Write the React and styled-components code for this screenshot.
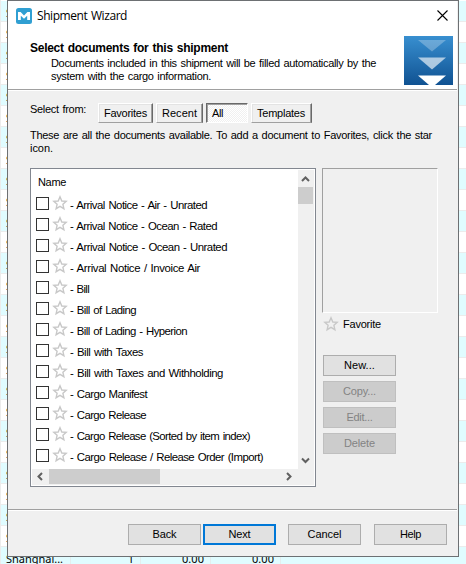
import React, { useLayoutEffect, useRef, useState } from "react";
import styled, { createGlobalStyle, css } from "styled-components";

const GlobalStyle = createGlobalStyle`
  * { box-sizing: border-box; }
  html, body { margin: 0; padding: 0; overflow: hidden; background: #fff; }
  body { font: 11px/13px "Liberation Sans", Arial, sans-serif; color: #000; }
  button { font: inherit; color: inherit; margin: 0; padding: 0; border-radius: 0; }
`;

const Screen = styled.div`
  position: relative;
  width: 466px;
  height: 564px;
  overflow: hidden;
  background: #fff;
`;

const Grid = styled.div`
  display: flex;
  flex-direction: column;
  padding-top: 1px;
  border-left: 1px solid #ececec;
`;

const GridRow = styled.div`
  flex: none;
  height: 21px;
  display: grid;
  grid-template-columns: 70px 70px 70px 70px 1fr;
  border-bottom: 1px solid #ececec;
  background: ${(p) => (p.$tinted ? "#e0fcff" : "#fff")};
  font: 11px/16px "Noto Sans", sans-serif;
  &:last-child { height: 17px; border-bottom: 0; }
`;

const GridCell = styled.div`
  padding: ${(p) => (p.$num ? "4px 6px 0 0" : "4px 0 0 5px")};
  text-align: ${(p) => (p.$num ? "right" : "left")};
  border-right: 1px solid #e3eeee;
  white-space: nowrap;
  &:last-child { border-right: 0; }
`;

const Dialog = styled.div`
  position: absolute;
  left: 7px;
  top: 0;
  width: 452px;
  height: 557px;
  display: flex;
  flex-direction: column;
  border: 1px solid #6d7073;
  background: #f0f0f0;
`;

const Header = styled.div`
  height: 90px;
  margin-right: 1px;
  border-bottom: 1px solid #fff;
  box-shadow: inset 0 -1px #a0a0a0;
  background: #fff;
`;

const TitleBar = styled.div`
  height: 30px;
  display: flex;
  align-items: center;
  padding: 0 9px 1px 8px;
  gap: 5px;
  font: 12px/16px "Open Sans", sans-serif;
  svg:last-child { margin-left: auto; }
`;

const Banner = styled.div`
  display: flex;
  justify-content: space-between;
  padding: 5px 4px 0 22px;
`;

const BannerText = styled.div`
  padding-top: 6px;
`;

const Heading = styled.div`
  height: 15px;
  font-size: 12px;
  font-weight: bold;
  line-height: 13px;
`;

const Description = styled.div`
  padding-left: 21px;
  line-height: 13px;
`;

const TabRow = styled.div`
  display: flex;
  height: 20px;
  margin-top: 12px;
  padding-left: 22px;
`;

const TabLabel = styled.div`
  width: 68px;
`;

const Tab = styled.button`
  height: 20px;
  width: ${(p) => p.$w}px;
  margin-right: 3px;
  padding-left: 5px;
  text-align: left;
  border: 1px solid;
  ${(p) =>
    p.$active
      ? css`
          border-color: #696969 #fff #fff #696969;
          box-shadow: inset 1px 1px #a0a0a0;
          background: repeating-conic-gradient(#fff 0 25%, #f0f0f0 0 50%) 0 0 / 2px 2px;
        `
      : css`
          border-color: #fff #696969 #a0a0a0 #fff;
          box-shadow: inset -1px 0 #a0a0a0, inset 1px 1px #e3e3e3;
          background: #f0f0f0;
        `}
`;

const Hint = styled.div`
  height: 33px;
  margin-top: 6px;
  padding-left: 22px;
`;

const Content = styled.div`
  display: flex;
  gap: 6px;
  height: 319px;
  margin-top: 6px;
  padding-left: 22px;
`;

const ListBox = styled.div`
  width: 286px;
  padding: 1px;
  display: grid;
  grid-template: 299px 16px / 266px 16px;
  border: 1px solid #828790;
  background: #fff;
`;

const List = styled.div`
  padding: 4px 0 0 4px;
  overflow: hidden;
`;

const ListHead = styled.div`
  height: 18px;
  padding: 2px 0 0 2px;
`;

const ListRow = styled.div`
  height: 21px;
  display: flex;
  align-items: flex-start;
`;

const Check = styled.div`
  width: 13px;
  height: 13px;
  margin: 5px 3px 0 0;
  border: 1px solid #333;
  background: #fff;
`;

const RowText = styled.div`
  margin: 7px 0 0 2px;
  font-size: 11.4px;
`;

const VScroll = styled.div`
  display: flex;
  flex-direction: column;
  justify-content: space-between;
  background: #f0f0f0;
`;

const HScroll = styled.div`
  grid-column: 1 / 3;
  display: flex;
  background: #f0f0f0;
`;

const VThumb = styled.div`
  height: 17px;
  width: 15px;
  margin-bottom: auto;
  background: #cdcdcd;
`;

const HThumb = styled.div`
  width: 111px;
  height: 15px;
  margin-right: auto;
  background: #cdcdcd;
`;

const Arrow = styled.svg`
  flex: none;
  display: block;
  width: ${(p) => (p.$wide ? 17 : 15)}px;
  height: ${(p) => (p.$wide ? 15 : 17)}px;
  margin-right: ${(p) => p.$end || 0}px;
`;

const Side = styled.div`
  width: 116px;
`;

const Preview = styled.div`
  height: 145px;
  border: 1px solid;
  border-color: #a0a0a0 #fff #fff #a0a0a0;
`;

const FavoriteLine = styled.div`
  display: flex;
  gap: 4px;
  height: 17px;
  margin: 3px 0 22px 1px;
  line-height: 16px;
`;

const Actions = styled.div`
  display: flex;
  flex-direction: column;
  gap: 5px;
  padding-left: 1px;
`;

const PushButton = styled.button`
  width: 73px;
  height: 21px;
  display: flex;
  align-items: center;
  justify-content: center;
  border: ${(p) => (p.$primary ? "2px solid #0078d7" : "1px solid #adadad")};
  background: #e1e1e1;
  &:disabled {
    color: #838383;
    border-color: #bfbfbf;
    background: #cccccc;
  }
`;

const Footer = styled.div`
  display: flex;
  justify-content: flex-end;
  height: 47px;
  margin: 22px 1px 0 0;
  padding: 14px 10px 0 0;
  border-top: 1px solid #a0a0a0;
  box-shadow: inset 0 1px #fff;
`;

const ButtonPair = styled.div`
  display: flex;
  gap: 2px;
  margin-right: -1px;
`;

const FooterButtons = styled.div`
  display: grid;
  grid-template-columns: auto 73px 73px;
  column-gap: 13px;
`;

const Line = styled.span`
  display: inline-block;
  white-space: pre;
  word-spacing: 1px;
`;

/* A single line of text, tracked so that it occupies the given width. */
function Fit({ w, children }) {
  const ref = useRef(null);
  const [tracking, setTracking] = useState(0);
  useLayoutEffect(() => {
    const natural = ref.current.getBoundingClientRect().width;
    setTracking((w - natural) / children.length);
  }, [w, children]);
  return (
    <Line ref={ref} style={{ letterSpacing: `${tracking}px` }}>
      {children}
    </Line>
  );
}

const StarSvg = styled.svg`
  flex: none;
  display: block;
  margin-top: ${(p) => p.$top || 0}px;
`;

const Star = ({ top }) => (
  <StarSvg $top={top} width="16" height="16" viewBox="0 0 16 16">
    <path
      d="M8 1.8 L9.8 6 L14.2 6.4 L10.9 9.3 L11.9 13.7 L8 11.4 L4.1 13.7 L5.1 9.3 L1.8 6.4 L6.2 6 Z"
      fill="none"
      stroke="#c8c8c8"
      strokeWidth="1.4"
    />
  </StarSvg>
);

const AppIcon = () => (
  <svg width="16" height="16" viewBox="0 0 16 16">
    <rect width="16" height="16" rx="2.5" fill="#309fd2" />
    <path d="M2 12 V4 H4.6 L8 7.6 L11.4 4 H14 V12 H11.2 V7.8 L8 10.8 L4.8 7.8 V12 Z" fill="#fff" />
  </svg>
);

const CloseIcon = () => (
  <svg width="11" height="11" viewBox="0 0 11 11">
    <path d="M.5 .5 L10.5 10.5 M10.5 .5 L.5 10.5" stroke="#000" strokeWidth="1.1" />
  </svg>
);

const BannerArt = () => (
  <svg width="49" height="49" viewBox="0 0 49 49">
    <defs>
      <linearGradient id="blue" x1="0" y1="0" x2="0" y2="1">
        <stop offset="0" stopColor="#388fd0" />
        <stop offset="1" stopColor="#105292" />
      </linearGradient>
    </defs>
    <rect width="49" height="49" fill="url(#blue)" />
    <path d="M14 4 H42 L28 15.5 Z" fill="#fff" opacity=".27" />
    <path d="M14 21.5 H42 L28 33.5 Z" fill="#fff" opacity=".63" />
    <path d="M14 39.5 H42 L31 49 H25 Z" fill="#fff" />
  </svg>
);

const documents = [
  ["- Arrival Notice - Air - Unrated", 137],
  ["- Arrival Notice - Ocean - Rated", 147],
  ["- Arrival Notice - Ocean - Unrated", 157],
  ["- Arrival Notice / Invoice Air", 130],
  ["- Bill", 19],
  ["- Bill of Lading", 66],
  ["- Bill of Lading - Hyperion", 117],
  ["- Bill with Taxes", 73],
  ["- Bill with Taxes and Withholding", 153],
  ["- Cargo Manifest", 77],
  ["- Cargo Release", 76],
  ["- Cargo Release (Sorted by item index)", 180],
  ["- Cargo Release / Release Order (Import)", 193],
];

const tabs = [
  ["Favorites", 55, 43],
  ["Recent", 47, 35],
  ["All", 42, 11],
  ["Templates", 61, 48],
];

const actions = [
  ["New...", 31],
  ["Copy...", 33],
  ["Edit...", 26],
  ["Delete", 31],
];

const gridRows = Array.from({ length: 27 }, (_, i) => i);

export default function App() {
  return (
    <Screen>
      <GlobalStyle />
      <Grid>
        {gridRows.map((i) => (
          <GridRow key={i} $tinted={i % 2 === 0}>
            <GridCell>{i === 26 ? <Fit w={57}>Shanghai...</Fit> : "S"}</GridCell>
            <GridCell $num>{i === 26 && "1"}</GridCell>
            <GridCell $num>{i === 26 && <Fit w={22}>0.00</Fit>}</GridCell>
            <GridCell $num>{i === 26 && <Fit w={22}>0.00</Fit>}</GridCell>
            <GridCell />
          </GridRow>
        ))}
      </Grid>
      <Dialog>
        <Header>
          <TitleBar>
            <AppIcon />
            <Fit w={90}>Shipment Wizard</Fit>
            <CloseIcon />
          </TitleBar>
          <Banner>
            <BannerText>
              <Heading>
                <Fit w={198}>Select documents for this shipment</Fit>
              </Heading>
              <Description>
                <Fit w={325}>Documents included in this shipment will be filled automatically by the</Fit>
                <br />
                <Fit w={160}>system with the cargo information.</Fit>
              </Description>
            </BannerText>
            <BannerArt />
          </Banner>
        </Header>
        <TabRow>
          <TabLabel>
            <Fit w={56}>Select from:</Fit>
          </TabLabel>
          {tabs.map(([label, width, textWidth]) => (
            <Tab key={label} $w={width} $active={label === "All"}>
              <Fit w={textWidth}>{label}</Fit>
            </Tab>
          ))}
        </TabRow>
        <Hint>
          <Fit w={402}>These are all the documents available. To add a document to Favorites, click the star</Fit>
          <br />
          <Fit w={23}>icon.</Fit>
        </Hint>
        <Content>
          <ListBox>
            <List>
              <ListHead>
                <Fit w={28}>Name</Fit>
              </ListHead>
              {documents.map(([label, width]) => (
                <ListRow key={label}>
                  <Check />
                  <Star top={3} />
                  <RowText>
                    <Fit w={width}>{label}</Fit>
                  </RowText>
                </ListRow>
              ))}
            </List>
            <VScroll>
              <Arrow>
                <path d="M4 11 L7.5 7.5 L11 11" fill="none" stroke="#606060" strokeWidth="2" />
              </Arrow>
              <VThumb />
              <Arrow>
                <path d="M4 6.5 L7.5 10 L11 6.5" fill="none" stroke="#606060" strokeWidth="2" />
              </Arrow>
            </VScroll>
            <HScroll>
              <Arrow $wide>
                <path d="M10 4 L6.5 7.5 L10 11" fill="none" stroke="#606060" strokeWidth="2" />
              </Arrow>
              <HThumb />
              <Arrow $wide $end={17}>
                <path d="M7 4 L10.5 7.5 L7 11" fill="none" stroke="#606060" strokeWidth="2" />
              </Arrow>
            </HScroll>
          </ListBox>
          <Side>
            <Preview />
            <FavoriteLine>
              <Star />
              <Fit w={38}>Favorite</Fit>
            </FavoriteLine>
            <Actions>
              {actions.map(([label, width]) => (
                <PushButton key={label} disabled={label !== "New..."}>
                  <Fit w={width}>{label}</Fit>
                </PushButton>
              ))}
            </Actions>
          </Side>
        </Content>
        <Footer>
          <FooterButtons>
            <ButtonPair>
              <PushButton>
                <Fit w={24}>Back</Fit>
              </PushButton>
              <PushButton $primary>
                <Fit w={22}>Next</Fit>
              </PushButton>
            </ButtonPair>
            <PushButton>
              <Fit w={34}>Cancel</Fit>
            </PushButton>
            <PushButton>
              <Fit w={21}>Help</Fit>
            </PushButton>
          </FooterButtons>
        </Footer>
      </Dialog>
    </Screen>
  );
}
